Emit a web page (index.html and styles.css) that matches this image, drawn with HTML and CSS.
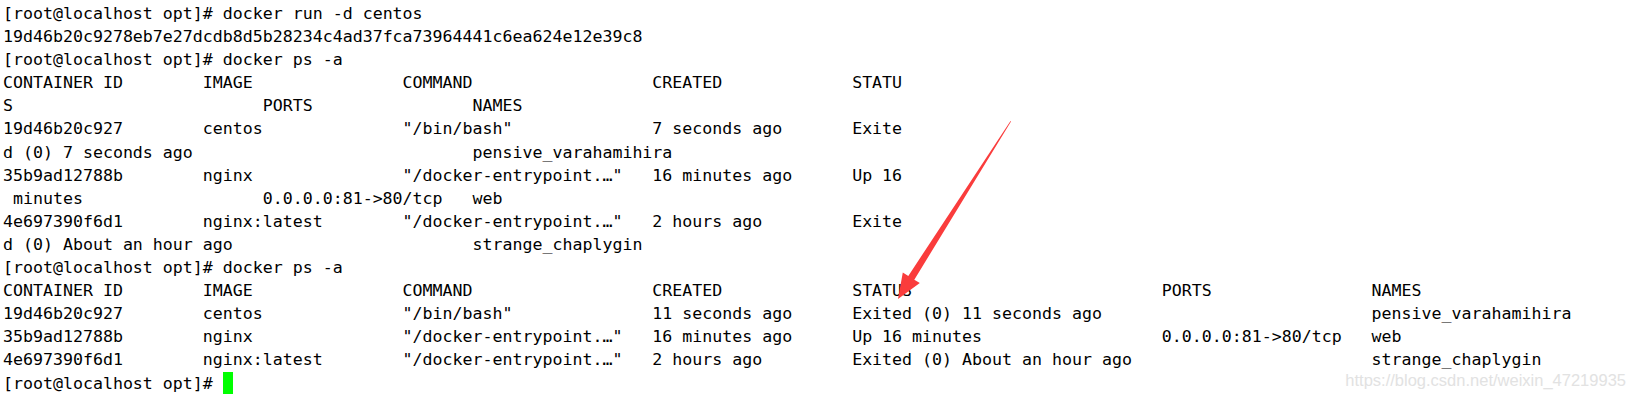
FILE: index.html
```html
<!DOCTYPE html>
<html>
<head>
<meta charset="utf-8">
<link rel="stylesheet" href="styles.css">
</head>
<body>
<div class="term">
  <div class="ln">[root@localhost opt]# docker run -d centos</div>
  <div class="ln">19d46b20c9278eb7e27dcdb8d5b28234c4ad37fca73964441c6ea624e12e39c8</div>
  <div class="ln">[root@localhost opt]# docker ps -a</div>
  <div class="ln"><span class="w20">CONTAINER ID</span><span class="w20">IMAGE</span><span class="w25">COMMAND</span><span class="w20">CREATED</span>STATU</div>
  <div class="ln"><span class="w26">S</span><span class="w21">PORTS</span>NAMES</div>
  <div class="ln"><span class="w20">19d46b20c927</span><span class="w20">centos</span><span class="w25">"/bin/bash"</span><span class="w20">7 seconds ago</span>Exite</div>
  <div class="ln"><span class="w47">d (0) 7 seconds ago</span>pensive_varahamihira</div>
  <div class="ln"><span class="w20">35b9ad12788b</span><span class="w20">nginx</span><span class="w25">"/docker-entrypoint.…"</span><span class="w20">16 minutes ago</span>Up 16</div>
  <div class="ln"><span class="w26"> minutes</span><span class="w21">0.0.0.0:81-&gt;80/tcp</span>web</div>
  <div class="ln"><span class="w20">4e697390f6d1</span><span class="w20">nginx:latest</span><span class="w25">"/docker-entrypoint.…"</span><span class="w20">2 hours ago</span>Exite</div>
  <div class="ln"><span class="w47">d (0) About an hour ago</span>strange_chaplygin</div>
  <div class="ln">[root@localhost opt]# docker ps -a</div>
  <div class="ln"><span class="w20">CONTAINER ID</span><span class="w20">IMAGE</span><span class="w25">COMMAND</span><span class="w20">CREATED</span><span class="w31">STATUS</span><span class="w21">PORTS</span>NAMES</div>
  <div class="ln"><span class="w20">19d46b20c927</span><span class="w20">centos</span><span class="w25">"/bin/bash"</span><span class="w20">11 seconds ago</span><span class="w31">Exited (0) 11 seconds ago</span><span class="w21"></span>pensive_varahamihira</div>
  <div class="ln"><span class="w20">35b9ad12788b</span><span class="w20">nginx</span><span class="w25">"/docker-entrypoint.…"</span><span class="w20">16 minutes ago</span><span class="w31">Up 16 minutes</span><span class="w21">0.0.0.0:81-&gt;80/tcp</span>web</div>
  <div class="ln"><span class="w20">4e697390f6d1</span><span class="w20">nginx:latest</span><span class="w25">"/docker-entrypoint.…"</span><span class="w20">2 hours ago</span><span class="w31">Exited (0) About an hour ago</span><span class="w21"></span>strange_chaplygin</div>
  <div class="ln">[root@localhost opt]# <span class="cursor"></span></div>
</div>
<svg class="arrow" width="1636" height="401" viewBox="0 0 1636 401">
  <polygon points="1010.5,121 908.3,275.9 902.8,272.5 898,299 919.8,283.1 914.3,279.7 1011,121.6" fill="#fa3c3c"/>
</svg>
<div class="mark">https://blog.csdn.net/weixin_47219935</div>
</body>
</html>
```
FILE: styles.css
```css
html, body {
  margin: 0;
  padding: 0;
  background: #ffffff;
}
body {
  position: relative;
  width: 1636px;
  height: 401px;
  overflow: hidden;
}
.term {
  padding: 2px 0 0 3px;
  font-family: "DejaVu Sans Mono", "Liberation Mono", monospace;
  font-size: 16.6px;
  color: #000;
}
.ln {
  height: 23.1px;
  line-height: 23px;
  white-space: pre;
}
.ln span {
  display: inline-block;
  white-space: pre;
  vertical-align: top;
}
.w20 { width: 20ch; }
.w21 { width: 21ch; }
.w25 { width: 25ch; }
.w26 { width: 26ch; }
.w31 { width: 31ch; }
.w47 { width: 47ch; }
.ln .cursor {
  width: 10px;
  height: 22px;
  background: #00ff00;
  vertical-align: top;
}
.arrow {
  position: absolute;
  left: 0;
  top: 0;
  pointer-events: none;
}
.mark {
  position: absolute;
  right: 10px;
  top: 371px;
  font-family: "Liberation Sans", Arial, sans-serif;
  font-size: 16.5px;
  color: #e2e2e2;
  white-space: nowrap;
}
```
